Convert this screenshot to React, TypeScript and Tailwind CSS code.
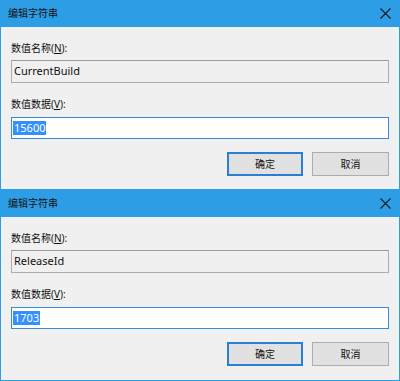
import React from 'react';

const font = { cjk: 'font-["Segoe_UI","Noto_Sans","Noto_Sans_CJK_SC",sans-serif]' };

type DialogProps = { name: string; value: string; last?: boolean };

const EditStringDialog: React.FC<DialogProps> = ({ name, value, last }) => {
    return (
        <div className={`flex flex-col w-[400px] ${last ? 'h-[191px]' : 'h-[190px]'} bg-[#f0f0f0] border-x border-b border-[#2d9de5] ${font.cjk}`}>
            {/* title bar */}
            <div className="h-[27px] -mx-px bg-[#2d9de5] flex items-center justify-between pl-[8px] pr-[9px]">
                <span className="text-[10px] text-[#111]">编辑字符串</span>
                <svg width="11" height="11" viewBox="0 0 11 11" className="text-[#1a1a1a]">
                    <path d="M0.5 0.5 L10.5 10.5 M10.5 0.5 L0.5 10.5" stroke="currentColor" strokeWidth="1.1" />
                </svg>
            </div>

            <div className="flex flex-col px-[10px] pt-[14px] text-[#111]">
                <label className="h-[14px] leading-[14px] text-[10px]">
                    数值名称(<span className="underline">N</span>):
                </label>
                <div className="mt-[5px] h-[23px] border border-[#adadad] border-t-[#9a9a9a] bg-[#f0f0f0] flex items-center pl-[2px] text-[11px]">
                    {name}
                </div>

                <label className="mt-[14px] h-[14px] leading-[14px] text-[10px]">
                    数值数据(<span className="underline">V</span>):
                </label>
                <div className="mt-[6px] h-[22px] border border-[#3a8bd6] bg-white flex items-center pl-[1px] text-[11px]">
                    <span className="bg-[#3390ff] text-white leading-[14px] px-px">{value}</span>
                </div>

                <div className="mt-[13px] flex justify-end gap-[9px] text-[10px]">
                    <button className="w-[76px] h-[24px] border-2 border-[#2a7fd4] bg-[#e1e1e1] text-[#111]">确定</button>
                    <button className="w-[77px] h-[24px] border border-[#adadad] bg-[#e1e1e1] text-[#111]">取消</button>
                </div>
            </div>
        </div>
    );
};

const App: React.FC = () => {
    return (
        <div className="w-[400px] h-[381px] overflow-hidden flex flex-col">
            <EditStringDialog name="CurrentBuild" value="15600" />
            <EditStringDialog name="ReleaseId" value="1703" last />
        </div>
    );
};

export default App;
